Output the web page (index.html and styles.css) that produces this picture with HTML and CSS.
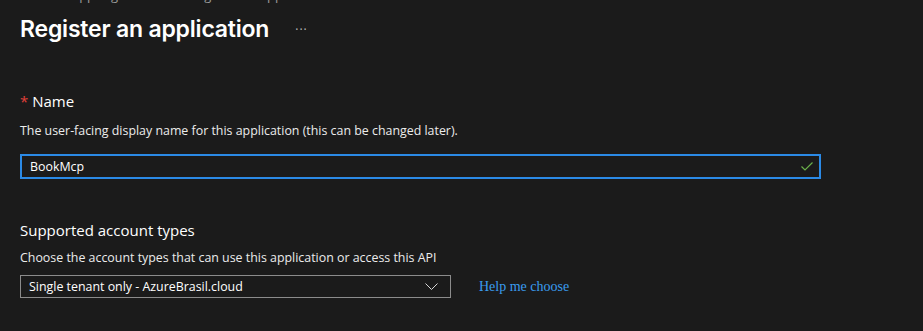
FILE: index.html
```html
<!DOCTYPE html>
<html lang="en">
<head>
  <meta charset="UTF-8" />
  <title>Register an application</title>
  <link rel="stylesheet" href="styles.css">
</head>
<body>
  <div class="crumbs">Home &gt; App registrations &gt; Register an application</div>

  <header class="page-head">
    <h1>Register an application</h1>
    <span class="more">&middot;&middot;&middot;</span>
  </header>

  <section class="field">
    <h2><span class="req">*</span> Name</h2>
    <p class="hint">The user-facing display name for this application (this can be changed later).</p>
    <div class="text-input">
      <span>BookMcp</span>
      <svg class="check" width="12" height="9" viewBox="0 0 12 9">
        <path d="M0.5 4.5 L4 8 L11.5 0.5" fill="none" stroke="#6bb14a" stroke-width="1.2"/>
      </svg>
    </div>
  </section>

  <section class="field accounts">
    <h2>Supported account types</h2>
    <p class="hint">Choose the account types that can use this application or access this API</p>
    <div class="select-row">
      <div class="select">
        <span>Single tenant only - AzureBrasil.cloud</span>
        <svg class="chev" width="13" height="7" viewBox="0 0 13 7">
          <path d="M0.5 0.5 L6.5 6.5 L12.5 0.5" fill="none" stroke="#d6d6d6" stroke-width="1"/>
        </svg>
      </div>
      <a class="help" href="#">Help me choose</a>
    </div>
  </section>
</body>
</html>
```

FILE: styles.css
```css
:root {
  --bg: #1b1b1b;
  --text: #ffffff;
  --muted: #ececec;
  --blue: #2b8ae6;
  --link: #3a9bef;
}

* {
  box-sizing: border-box;
  margin: 0;
  padding: 0;
}

body {
  background-color: var(--bg);
  color: var(--text);
  font-family: "Open Sans", "Noto Sans", sans-serif;
  padding: 0 20px;
  height: 331px;
  overflow: hidden;
}

.crumbs {
  font-size: 13px;
  line-height: 13px;
  margin-top: -11px;
  color: #9a9a9a;
}

.page-head {
  display: flex;
  align-items: center;
  margin-top: 12px;
  height: 30px;
}

.page-head h1 {
  font-family: Inter, sans-serif;
  font-size: 23px;
  font-weight: 600;
  letter-spacing: -0.2px;
}

.more {
  margin-left: 26px;
  font-size: 12px;
  color: #bbb;
  letter-spacing: 1px;
}

.field h2 {
  font-size: 15px;
  font-weight: 400;
  line-height: 20px;
}

.req {
  color: #e0403a;
}

.field {
  margin-top: 47px;
}

.hint {
  font-size: 12.4px;
  margin-top: 12px;
  line-height: 16px;
  color: var(--muted);
}

.text-input {
  margin-top: 15px;
  width: 801px;
  height: 25px;
  border: 2px solid var(--blue);
  display: flex;
  align-items: center;
  justify-content: space-between;
  padding: 0 6px 0 8px;
  font-size: 12.4px;
}

.accounts {
  margin-top: 41px;
}

.accounts .hint {
  margin-top: 10px;
}

.select-row {
  display: flex;
  align-items: center;
  margin-top: 9px;
}

.select {
  width: 431px;
  height: 23px;
  border: 1px solid #8c8c8c;
  display: flex;
  align-items: center;
  justify-content: space-between;
  padding: 0 12px 0 8px;
  font-size: 12.4px;
}

.help {
  margin-left: 28px;
  font-family: "Liberation Serif", serif;
  font-size: 14px;
  color: var(--link);
  text-decoration: none;
}
```
